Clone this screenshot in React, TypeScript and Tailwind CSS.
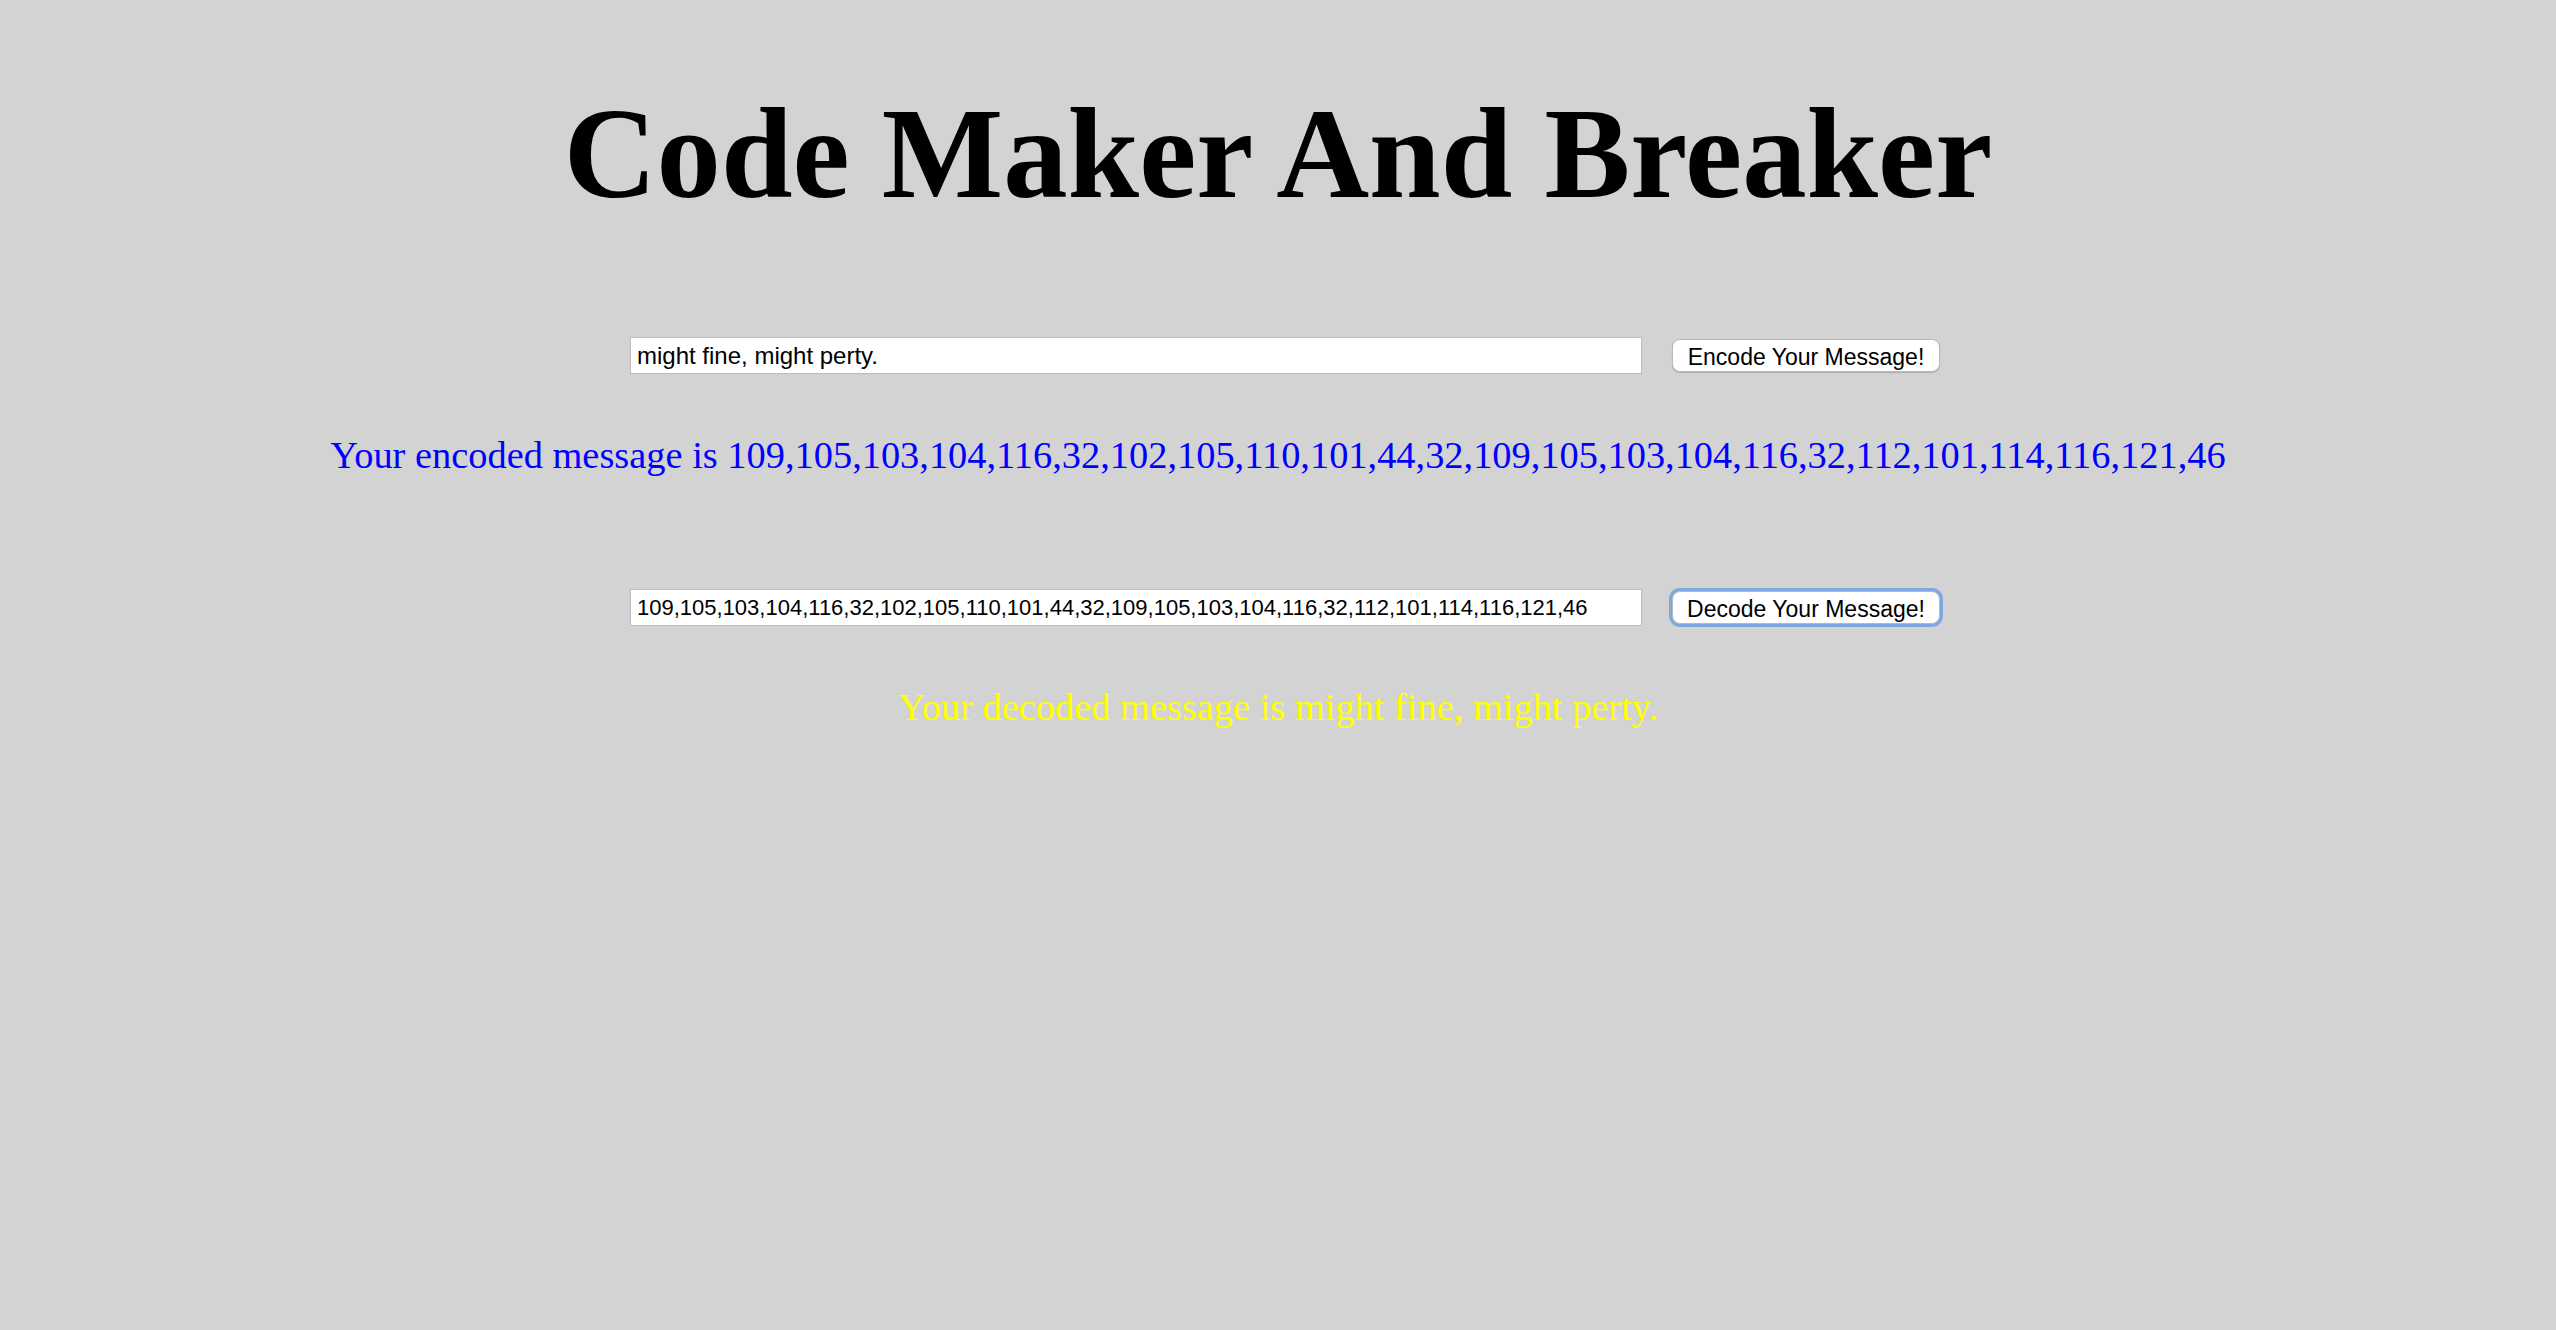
import { useState } from "react";

// Encoder/decoder page: each character becomes its char code, joined by commas.
const encode = (text: string) =>
  Array.from(text)
    .map((ch) => ch.charCodeAt(0))
    .join(",");

const decode = (codes: string) =>
  codes
    .split(",")
    .map((n) => n.trim())
    .filter(Boolean)
    .map((n) => String.fromCharCode(Number(n)))
    .join("");

const serif = "font-['Liberation_Serif','Times_New_Roman',serif]";
const sans = "font-['Liberation_Sans',Arial,sans-serif]";

function Row({
  value,
  onChange,
  label,
  onClick,
  focused,
  textSize,
}: {
  value: string;
  onChange: (v: string) => void;
  label: string;
  onClick: () => void;
  focused?: boolean;
  textSize: string;
}) {
  return (
    <div className="flex items-center justify-center gap-[30px] pl-[14px]">
      <input
        value={value}
        onChange={(e) => onChange(e.target.value)}
        className={`h-[37px] w-[1012px] border border-[#bdbdbd] bg-white px-[6px] text-black outline-none ${sans} ${textSize}`}
      />
      <button
        onClick={onClick}
        className={`h-[33px] w-[268px] rounded-[8px] border border-[#b8b8b8] bg-white text-[23px] text-black shadow-[0_1px_1px_rgba(0,0,0,0.18)] ${sans} ${
          focused ? "ring-[3px] ring-[#7fa8e0]" : ""
        }`}
      >
        {label}
      </button>
    </div>
  );
}

export default function App() {
  const [plain, setPlain] = useState("might fine, might perty.");
  const [encoded, setEncoded] = useState(encode("might fine, might perty."));
  const [codes, setCodes] = useState(encode("might fine, might perty."));
  const [decoded, setDecoded] = useState("might fine, might perty.");

  return (
    <div className="min-h-screen bg-[#d3d3d3] pt-[90px]">
      <h1
        className={`text-center text-[128.7px] font-bold leading-[128px] text-black ${serif}`}
      >
        Code Maker And Breaker
      </h1>

      <div className="mt-[119px]">
        <Row
          value={plain}
          onChange={setPlain}
          label="Encode Your Message!"
          onClick={() => setEncoded(encode(plain))}
          textSize="text-[24px]"
        />
      </div>

      <p
        className={`mt-[62px] text-center text-[38.4px] leading-[38px] text-[#0000ff] ${serif}`}
      >
        Your encoded message is {encoded}
      </p>

      <div className="mt-[115px]">
        <Row
          value={codes}
          onChange={setCodes}
          label="Decode Your Message!"
          onClick={() => setDecoded(decode(codes))}
          focused
          textSize="text-[22px]"
        />
      </div>

      <p
        className={`mt-[62px] text-center text-[38.4px] leading-[38px] text-[#ffff00] ${serif}`}
      >
        Your decoded message is {decoded}
      </p>
    </div>
  );
}
